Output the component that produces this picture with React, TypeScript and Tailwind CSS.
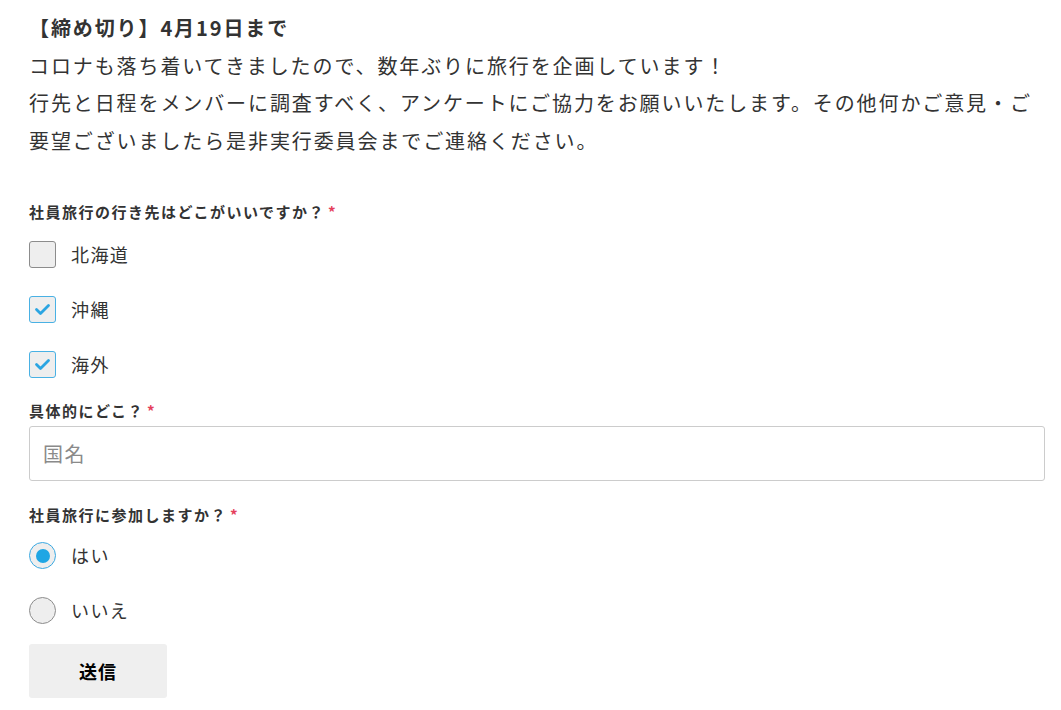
const font = { fontFamily: '"Noto Sans CJK JP", "Noto Sans", sans-serif' };

const destinations = [
  { label: "北海道", checked: false },
  { label: "沖縄", checked: true },
  { label: "海外", checked: true },
];

const answers = [
  { label: "はい", checked: true },
  { label: "いいえ", checked: false },
];

const FieldLabel = ({ text }: { text: string }) => (
  <p className="text-[15px] leading-[22px] font-bold text-[#333] tracking-[1.5px]">
    {text}
    <span className="text-[#e5405c] text-[15px] align-top ml-[3px]">*</span>
  </p>
);

const CheckBox = ({ checked }: { checked: boolean }) => (
  <span
    className={
      checked
        ? "w-[27px] h-[27px] rounded-[3px] border border-[#49b1e4] bg-[#eeeeee] flex items-center justify-center"
        : "w-[27px] h-[27px] rounded-[3px] border border-[#8c8c8c] bg-[#eeeeee] flex items-center justify-center"
    }
  >
    {checked && (
      <svg width="17" height="17" viewBox="0 0 17 17">
        <polyline points="2.5,8.5 6.5,12.5 14.5,4.5" fill="none" stroke="#2ba5e2" strokeWidth="2.8" strokeLinecap="round" strokeLinejoin="round" />
      </svg>
    )}
  </span>
);

const Radio = ({ checked }: { checked: boolean }) => (
  <span
    className={
      checked
        ? "w-[27px] h-[27px] rounded-full border border-[#3aa9e2] bg-[#eeeeee] flex items-center justify-center"
        : "w-[27px] h-[27px] rounded-full border border-[#8c8c8c] bg-[#eeeeee] flex items-center justify-center"
    }
  >
    {checked && <span className="w-[14px] h-[14px] rounded-full bg-[#1fa6e4]" />}
  </span>
);

export default function App() {
  return (
    <div className="bg-white min-h-[710px] pl-[29px] pr-[16px] pt-[9px] text-[#333]" style={font}>
      <h1 className="text-[20px] leading-[37.5px] font-bold tracking-[1.9px]">【締め切り】4月19日まで</h1>
      <p className="text-[20px] leading-[37.5px] tracking-[1.9px]">
        コロナも落ち着いてきましたので、数年ぶりに旅行を企画しています！
        <br />
        行先と日程をメンバーに調査すべく、アンケートにご協力をお願いいたします。その他何かご意見・ご要望ございましたら是非実行委員会までご連絡ください。
      </p>

      <div className="mt-[42px]">
        <FieldLabel text="社員旅行の行き先はどこがいいですか？" />
        <div className="mt-[18px] flex flex-col gap-[28px]">
          {destinations.map((item) => (
            <label key={item.label} className="flex items-center gap-[15px] h-[27px]">
              <CheckBox checked={item.checked} />
              <span className="text-[18px] tracking-[1.4px] text-[#333]">{item.label}</span>
            </label>
          ))}
        </div>
      </div>

      <div className="mt-[22px]">
        <FieldLabel text="具体的にどこ？" />
        <input
          placeholder="国名"
          className="mt-[4px] w-full h-[55px] border border-[#cccccc] rounded-[3px] px-[13px] text-[20px] tracking-[1.5px] placeholder:text-[#8a8a8a] outline-none"
        />
      </div>

      <div className="mt-[23px]">
        <FieldLabel text="社員旅行に参加しますか？" />
        <div className="mt-[16px] flex flex-col gap-[28px]">
          {answers.map((item) => (
            <label key={item.label} className="flex items-center gap-[15px] h-[27px]">
              <Radio checked={item.checked} />
              <span className="text-[18px] tracking-[1.4px] text-[#333]">{item.label}</span>
            </label>
          ))}
        </div>
      </div>

      <button className="mt-[20px] w-[138px] h-[54px] rounded-[3px] bg-[#efefef] text-[18px] font-bold text-black tracking-[1px]">
        送信
      </button>
    </div>
  );
}
